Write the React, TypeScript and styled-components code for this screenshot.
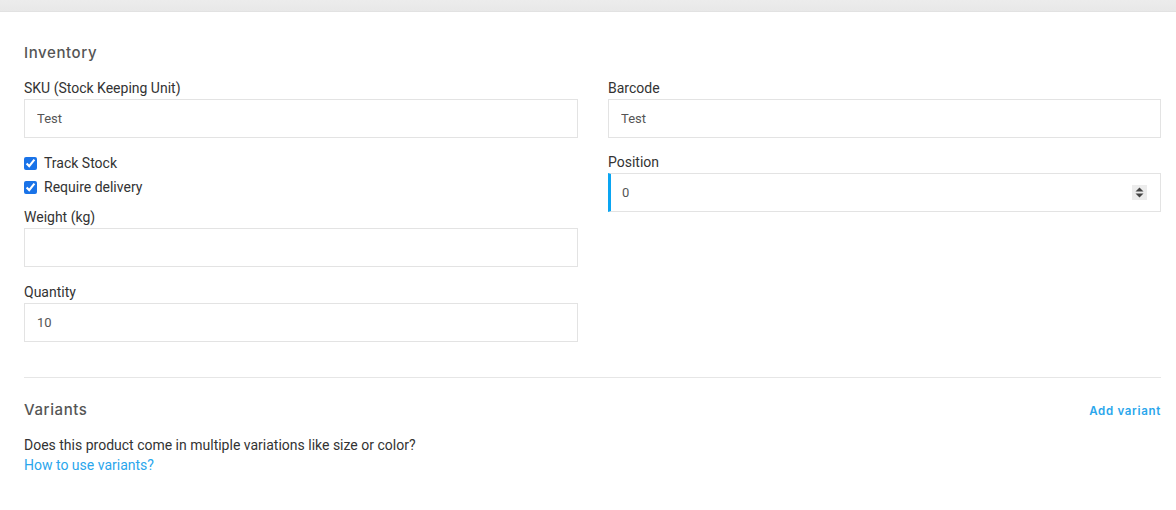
import React from "react";
import styled, { createGlobalStyle } from "styled-components";

const Global = createGlobalStyle`
  html, body { margin: 0; padding: 0; background: #fff; }
  body { font-family: Roboto, "Liberation Sans", Arial, sans-serif; color: #333; }
  * { box-sizing: border-box; }
`;

const TopBar = styled.div`
  height: 12px;
  background: linear-gradient(#ececec, #e8e8e8);
  border-bottom: 1px solid #e2e2e2;
`;

const Page = styled.div`
  padding: 31px 15px 0 24px;
`;

const SectionTitle = styled.h2`
  margin: 0;
  font-family: Inter, "Open Sans", sans-serif;
  font-size: 15px;
  font-weight: 500;
  letter-spacing: 0.6px;
  line-height: 20px;
  color: #555;
`;

const Columns = styled.div`
  display: grid;
  grid-template-columns: 554px 553px;
  column-gap: 30px;
  margin-top: 16px;
`;

const Column = styled.div`
  display: flex;
  flex-direction: column;
`;

const Field = styled.div<{ $mb?: number }>`
  display: flex;
  flex-direction: column;
  margin-bottom: ${(p) => (p.$mb ?? 16)}px;
`;

const Label = styled.label`
  font-size: 14px;
  line-height: 18px;
  color: #333;
  margin-bottom: 2px;
`;

const InputBox = styled.div<{ $focused?: boolean }>`
  height: 39px;
  display: flex;
  align-items: center;
  border: 1px solid #e3e3e3;
  border-left: ${(p) => (p.$focused ? "3px solid #0aa5f2" : "1px solid #e3e3e3")};
  padding: 0 13px 0 ${(p) => (p.$focused ? 11 : 12)}px;
  background: #fff;
`;

const Input = styled.input`
  flex: 1;
  border: none;
  outline: none;
  padding: 0;
  font-family: Roboto, "Liberation Sans", Arial, sans-serif;
  font-size: 13px;
  color: #555;
  background: transparent;
  &::-webkit-inner-spin-button,
  &::-webkit-outer-spin-button {
    -webkit-appearance: none;
    margin: 0;
  }
`;

const Spinner = styled.div`
  width: 15px;
  height: 15px;
  background: #ececec;
  display: flex;
  align-items: center;
  justify-content: center;
`;

const Checks = styled.div`
  display: flex;
  flex-direction: column;
  margin-top: -3px;
  margin-bottom: 9px;
`;

const CheckRow = styled.label`
  display: flex;
  align-items: center;
  height: 24px;
  font-size: 14px;
  color: #333;
`;

const CheckBox = styled.input`
  width: 13px;
  height: 13px;
  margin: 0 7px 0 0;
  accent-color: #1a73e8;
`;

const Divider = styled.hr`
  border: none;
  border-top: 1px solid #e6e6e6;
  margin: 35px 0 22px;
`;

const VariantHead = styled.div`
  display: flex;
  justify-content: space-between;
  align-items: center;
`;

const AddLink = styled.a`
  font-family: Inter, "Open Sans", sans-serif;
  font-size: 11.5px;
  font-weight: 600;
  letter-spacing: 0.7px;
  color: #2aa6ec;
  text-decoration: none;
  cursor: pointer;
  margin-top: 2px;
`;

const Description = styled.p`
  margin: 15px 0 0;
  font-size: 14px;
  line-height: 20px;
  color: #333;
`;

const HelpLink = styled.a`
  display: block;
  font-size: 14px;
  line-height: 20px;
  color: #2aa6ec;
  text-decoration: none;
`;

export default function App() {
  return (
    <>
      <Global />
      <TopBar />
      <Page>
        <SectionTitle>Inventory</SectionTitle>
        <Columns>
          <Column>
            <Field>
              <Label>SKU (Stock Keeping Unit)</Label>
              <InputBox>
                <Input defaultValue="Test" />
              </InputBox>
            </Field>
            <Checks>
              <CheckRow>
                <CheckBox type="checkbox" defaultChecked />
                Track Stock
              </CheckRow>
              <CheckRow>
                <CheckBox type="checkbox" defaultChecked />
                Require delivery
              </CheckRow>
            </Checks>
            <Field>
              <Label>Weight (kg)</Label>
              <InputBox>
                <Input defaultValue="" />
              </InputBox>
            </Field>
            <Field $mb={0}>
              <Label>Quantity</Label>
              <InputBox>
                <Input defaultValue="10" />
              </InputBox>
            </Field>
          </Column>
          <Column>
            <Field $mb={15}>
              <Label>Barcode</Label>
              <InputBox>
                <Input defaultValue="Test" />
              </InputBox>
            </Field>
            <Field>
              <Label>Position</Label>
              <InputBox $focused>
                <Input type="number" defaultValue="0" />
                <Spinner>
                  <svg width="9" height="11" viewBox="0 0 9 11">
                    <path d="M4.5 0.5 L8.5 4.5 L0.5 4.5 Z" fill="#444" />
                    <path d="M0.5 6.5 L8.5 6.5 L4.5 10.5 Z" fill="#444" />
                  </svg>
                </Spinner>
              </InputBox>
            </Field>
          </Column>
        </Columns>
        <Divider />
        <VariantHead>
          <SectionTitle>Variants</SectionTitle>
          <AddLink>Add variant</AddLink>
        </VariantHead>
        <Description>Does this product come in multiple variations like size or color?</Description>
        <HelpLink>How to use variants?</HelpLink>
      </Page>
    </>
  );
}
